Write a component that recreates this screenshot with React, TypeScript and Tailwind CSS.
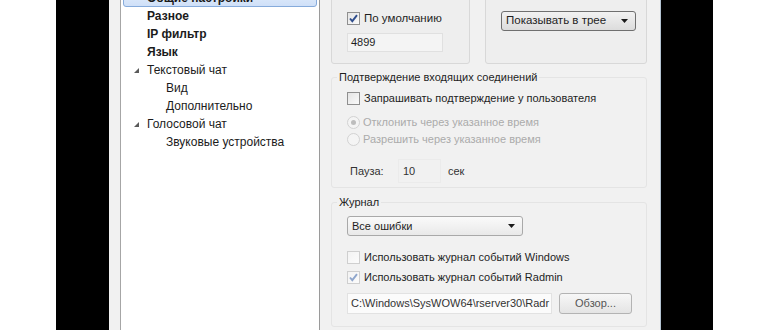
import React from "react";

function CheckBox({ checked = false, disabled = false }: { checked?: boolean; disabled?: boolean }) {
  return (
    <span
      className={`flex h-[13px] w-[13px] shrink-0 items-center justify-center border bg-gradient-to-br ${
        disabled ? "border-[#cfcfcf] from-[#f3f3f3] to-[#fbfbfb]" : "border-[#8f8f8f] from-[#e4e4e4] to-[#fafafa]"
      }`}
    >
      {checked && (
        <svg width="11" height="11" viewBox="0 0 11 11">
          <path
            d="M2 5.5 L4.3 8.2 L9 2.2"
            fill="none"
            stroke={disabled ? "#8fa6cc" : "#2f4d8c"}
            strokeWidth="1.9"
          />
        </svg>
      )}
    </span>
  );
}

function Radio({ selected = false }: { selected?: boolean }) {
  return (
    <span className="flex h-[13px] w-[13px] shrink-0 items-center justify-center rounded-full border border-[#d2d2d2] bg-[#f4f4f4]">
      {selected && <span className="h-[5px] w-[5px] rounded-full bg-[#bdbdbd]" />}
    </span>
  );
}

function Combo({ text, width, dark = false }: { text: string; width: string; dark?: boolean }) {
  return (
    <div
      className={`flex h-[20px] items-center justify-between rounded-[3px] border bg-gradient-to-b pl-[4px] pr-[7px] ${width} ${
        dark ? "border-[#6f6f6f] from-[#f2f2f2] to-[#dcdcdc] text-[11.5px]" : "border-[#a9a9a9] from-[#fafafa] to-[#e9e9e9]"
      }`}
    >
      <span className="text-[#1e1e1e]">{text}</span>
      <svg width="7" height="4" viewBox="0 0 7 4">
        <path d="M0 0 H7 L3.5 4 Z" fill="#1a1a1a" />
      </svg>
    </div>
  );
}

const tree = [
  { label: "Разное", level: 0, bold: true },
  { label: "IP фильтр", level: 0, bold: true },
  { label: "Язык", level: 0, bold: true },
  { label: "Текстовый чат", level: 0, expanded: true },
  { label: "Вид", level: 1 },
  { label: "Дополнительно", level: 1 },
  { label: "Голосовой чат", level: 0, expanded: true },
  { label: "Звуковые устройства", level: 1 },
];

function Tree() {
  return (
    <div className="h-full w-[200px] shrink-0 border-x border-l-[#a6a6a6] border-r-[#9a9a9a] bg-white text-[12px] text-[#1b1b1b]">
      <div className="-mt-[11px] flex flex-col">
        <div className="mx-[2px] flex h-[18px] items-center rounded-[3px] border border-[#86abdb] bg-gradient-to-b from-[#e6effb] to-[#cfe0f8] pl-[23px] font-bold">
          Общие настройки
        </div>
        {tree.map((item) => (
          <div
            key={item.label}
            className={`flex h-[18px] items-center ${item.level === 1 ? "pl-[45px]" : "pl-[26px]"} ${
              item.bold ? "font-bold" : ""
            }`}
          >
            {item.expanded && (
              <svg className="-ml-[13px] mr-[8px]" width="5" height="5" viewBox="0 0 5 5">
                <path d="M5 0 V5 H0 Z" fill="#5a5a5a" />
              </svg>
            )}
            {item.label}
          </div>
        ))}
      </div>
    </div>
  );
}

export default function App() {
  return (
    <div
      className="flex h-[330px] w-[770px] overflow-hidden bg-white text-[11px] text-[#1e1e1e]"
      style={{ fontFamily: '"Liberation Sans", Arial, sans-serif' }}
    >
      <div className="w-[56px] shrink-0 bg-white" />
      <div className="w-[53px] shrink-0 bg-black" />

      {/* dialog */}
      <div className="flex w-[552px] shrink-0 bg-[#f1f1f1] pl-[11px]">
        <Tree />

        <div className="flex flex-1 flex-col border-r border-r-[#b4c4d2] pl-[11px] pr-[13px]">
          {/* top boxes */}
          <div className="-mt-[21px] flex gap-[15px]">
            <div className="h-[85px] w-[139px] rounded-[3px] border border-[#d8d8d8] bg-[#eeeeee] pl-[15px] pt-[32px]">
              <label className="flex h-[13px] items-center gap-[4px]">
                <CheckBox checked />
                <span className="text-[11.5px]">По умолчанию</span>
              </label>
              <div className="mt-[8px] flex h-[19px] w-[96px] items-center border border-[#e0e0e0] bg-[#f4f4f4] pl-[3px]">
                4899
              </div>
            </div>
            <div className="h-[85px] w-[162px] rounded-[3px] border border-[#d8d8d8] bg-[#eeeeee] pl-[15px] pt-[31px]">
              <Combo text="Показывать в трее" width="w-[135px]" dark />
            </div>
          </div>

          {/* incoming connections */}
          <fieldset className="mt-[6px] rounded-[3px] border border-[#e4e4e4] pb-[4px] pl-[5px]">
            <legend className="px-[2px] leading-[14px]">Подтверждение входящих соединений</legend>
            <div className="pl-[10px]">
              <label className="mt-[6px] flex h-[16px] items-center gap-[4px]">
                <CheckBox />
                Запрашивать подтверждение у пользователя
              </label>
              <label className="mt-[8px] flex h-[16px] items-center gap-[3px] text-[#ababab]">
                <Radio selected />
                Отклонить через указанное время
              </label>
              <label className="mt-[1px] flex h-[16px] items-center gap-[3px] text-[#ababab]">
                <Radio />
                Разрешить через указанное время
              </label>
              <div className="mt-[12px] flex h-[24px] items-center pl-[3px] text-[#333]">
                <span className="w-[48px]">Пауза:</span>
                <span className="flex h-[24px] w-[43px] items-center border border-[#ebebeb] pl-[4px]">10</span>
                <span className="ml-[7px]">сек</span>
              </div>
            </div>
          </fieldset>

          {/* log */}
          <fieldset className="mt-[7px] rounded-[3px] border border-[#e4e4e4] pl-[5px]">
            <legend className="px-[2px] leading-[14px]">Журнал</legend>
            <div className="pl-[10px]">
              <div className="mt-[7px]">
                <Combo text="Все ошибки" width="w-[176px]" />
              </div>
              <label className="mt-[13px] flex h-[16px] items-center gap-[4px]">
                <CheckBox disabled />
                Использовать журнал событий Windows
              </label>
              <label className="mt-[4px] flex h-[16px] items-center gap-[4px]">
                <CheckBox checked disabled />
                Использовать журнал событий Radmin
              </label>
              <div className="mt-[8px] flex items-center gap-[7px] pb-[12px]">
                <div className="flex h-[21px] w-[205px] items-center overflow-hidden whitespace-nowrap border border-[#e2e2e2] bg-[#fbfbfb] pl-[3px] text-[#333]">
                  C:\Windows\SysWOW64\rserver30\Radr
                </div>
                <button className="h-[21px] w-[73px] rounded-[3px] border border-[#b3b3b3] bg-gradient-to-b from-[#f7f7f7] to-[#e4e4e4] text-[#555]">
                  Обзор...
                </button>
              </div>
            </div>
          </fieldset>
        </div>
      </div>

      <div className="w-[52px] shrink-0 bg-black" />
      <div className="flex-1 bg-white" />
    </div>
  );
}
